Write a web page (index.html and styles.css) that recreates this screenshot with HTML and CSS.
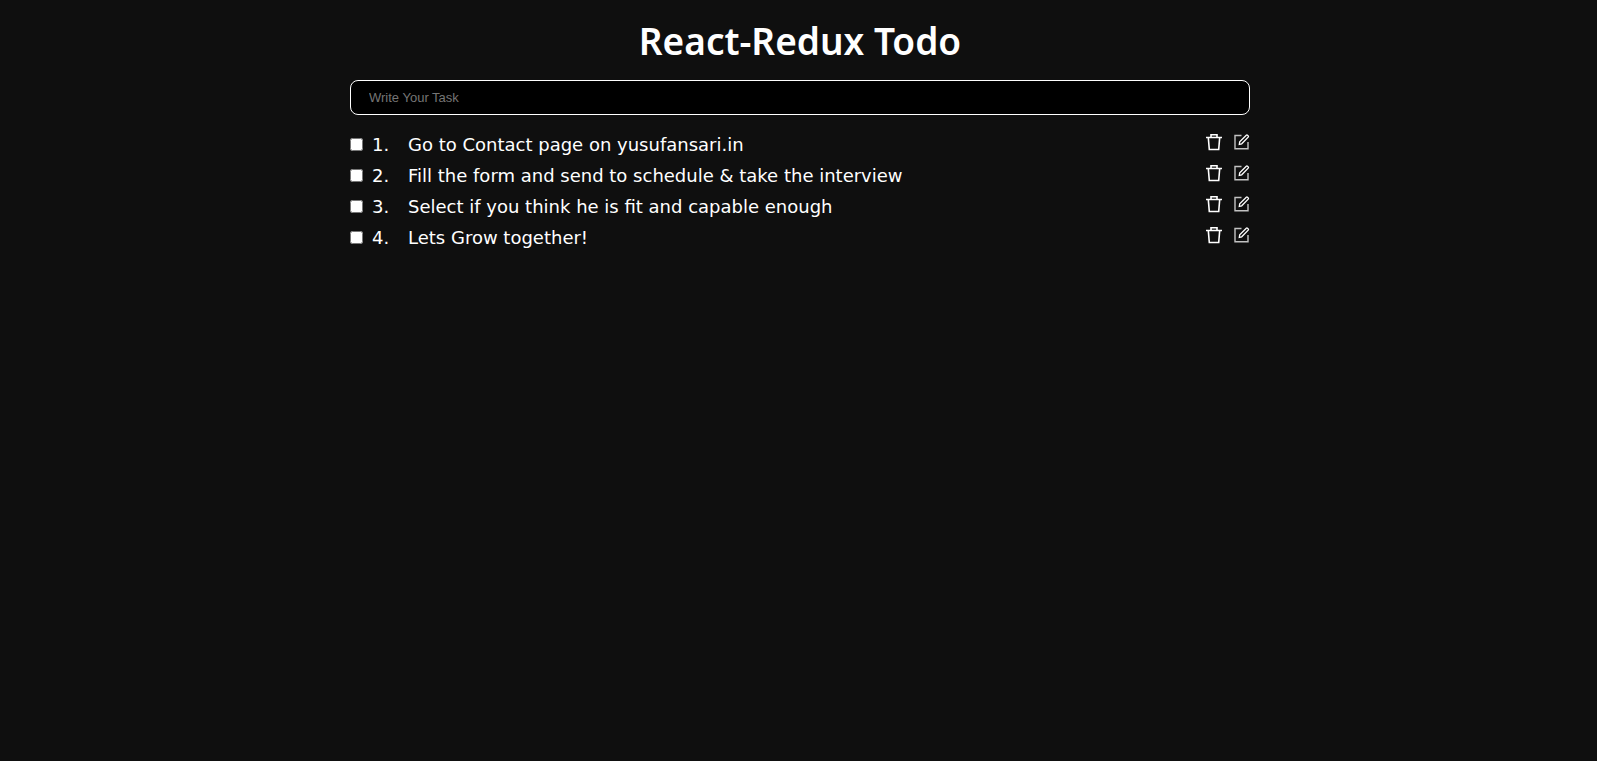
FILE: index.html
```
<!DOCTYPE html>
<html lang="en">
<head>
<meta charset="utf-8">
<title>React-Redux Todo</title>
<link rel="stylesheet" href="styles.css">
</head>
<body>
<svg class="sprite" aria-hidden="true">
  <symbol id="trash" viewBox="0 0 20 20"><path d="M3 5.500h16M8 5.500V2.700h6v2.800M5.300 5.500l1 12h9.400l1-12" fill="none" stroke="currentColor" stroke-width="1.600"/></symbol>
  <symbol id="edit" viewBox="0 0 20 20"><path d="M11.500 3.500H5v13.200h13V10" fill="none" stroke="currentColor" stroke-width="1.400" opacity=".75"/><path d="M9.300 12.300l.4-2.500L16.300 3.200q.6-.6 1.200 0l.7.700q.6.600 0 1.200L11.700 11.800z" fill="none" stroke="currentColor" stroke-width="1.300"/></symbol>
</svg>
<main class="app">
  <h1 class="title">React-Redux Todo</h1>
  <form class="form"><input class="task-input" type="text" placeholder="Write Your Task" aria-label="Write Your Task"></form>
  <ul class="list">
    <li class="item"><label class="task"><input class="check" type="checkbox"><span class="number">1.</span><span>Go to Contact page on yusufansari.in</span></label><div class="actions"><button class="icon-button" type="button" aria-label="Delete"><svg class="icon"><use href="#trash"/></svg></button><button class="icon-button" type="button" aria-label="Edit"><svg class="icon"><use href="#edit"/></svg></button></div></li>
    <li class="item"><label class="task"><input class="check" type="checkbox"><span class="number">2.</span><span>Fill the form and send to schedule &amp; take the interview</span></label><div class="actions"><button class="icon-button" type="button" aria-label="Delete"><svg class="icon"><use href="#trash"/></svg></button><button class="icon-button" type="button" aria-label="Edit"><svg class="icon"><use href="#edit"/></svg></button></div></li>
    <li class="item"><label class="task"><input class="check" type="checkbox"><span class="number">3.</span><span>Select if you think he is fit and capable enough</span></label><div class="actions"><button class="icon-button" type="button" aria-label="Delete"><svg class="icon"><use href="#trash"/></svg></button><button class="icon-button" type="button" aria-label="Edit"><svg class="icon"><use href="#edit"/></svg></button></div></li>
    <li class="item"><label class="task"><input class="check" type="checkbox"><span class="number">4.</span><span>Lets Grow together!</span></label><div class="actions"><button class="icon-button" type="button" aria-label="Delete"><svg class="icon"><use href="#trash"/></svg></button><button class="icon-button" type="button" aria-label="Edit"><svg class="icon"><use href="#edit"/></svg></button></div></li>
  </ul>
</main>
</body>
</html>
```
FILE: styles.css
```
* { box-sizing: border-box; }
body { margin: 0; padding-left: 3px; background: #0f0f0f; color: #fff; font-family: Verdana, "DejaVu Sans", sans-serif; }
.sprite { display: none; }
.app { width: 90%; max-width: 900px; margin: 0 auto; padding-top: 17px; }
.title { margin: 0 0 15px; font-size: 37px; line-height: 48px; font-family: Tahoma, "Noto Sans", sans-serif; font-weight: 600; text-align: center; }
.task-input { display: block; width: 100%; height: 35px; padding: 0 18px; border: 1px solid #fff; border-radius: 8px; background: #000; color: #fff; font: 13px "Liberation Sans", Arial, sans-serif; }
.task-input::placeholder { color: #757575; }
.list { list-style: none; margin: 14px 0 0; padding: 0; }
.item { display: flex; justify-content: space-between; height: 31px; }
.task { display: flex; align-items: center; font-size: 18px; }
.check { width: 13px; height: 13px; margin: 0 9px 0 0; }
.number { width: 36px; }
.actions { display: flex; align-items: flex-start; gap: 7px; padding-top: 3px; }
.icon-button { display: flex; padding: 0; border: 0; background: none; color: #fff; }
.icon { width: 20px; height: 20px; }
```
